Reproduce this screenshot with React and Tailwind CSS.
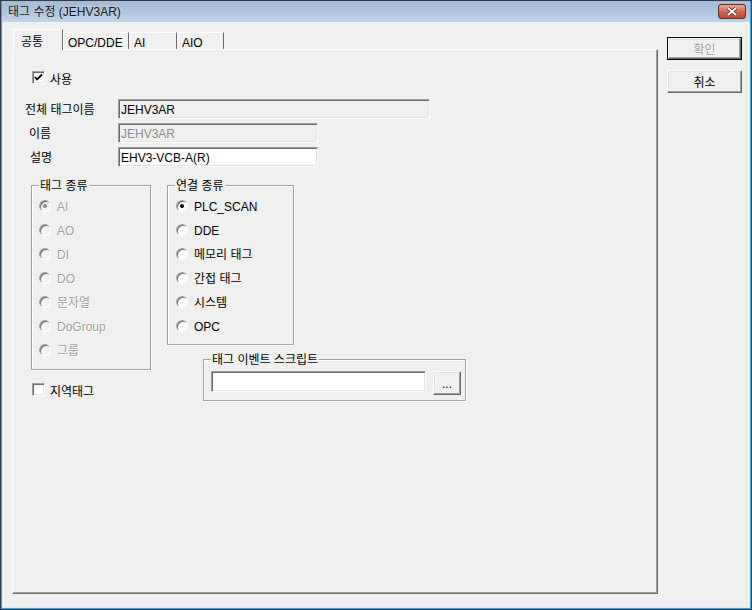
import React from 'react'

const sunken = "border border-t-[#a0a0a0] border-l-[#a0a0a0] border-b-white border-r-white shadow-[inset_1px_1px_0_#696969,inset_-1px_-1px_0_#e3e3e3]";
const raised = "border border-t-white border-l-white border-b-[#696969] border-r-[#696969] shadow-[inset_-1px_-1px_0_#a0a0a0,inset_1px_1px_0_#e3e3e3] bg-[#f0f0f0]";
const etched = "border border-[#a0a0a0] shadow-[inset_1px_1px_0_#fff,1px_1px_0_#fff]";

function Check({ checked }) {
  return (
    <div className={`w-[13px] h-[13px] bg-white flex items-center justify-center ${sunken}`}>
      {checked && (
        <svg width="9" height="9" viewBox="0 0 9 9">
          <path d="M1 4 L3 6.5 L8 1.5" stroke="#000" strokeWidth="1.8" fill="none" />
        </svg>
      )}
    </div>
  );
}

function Radio({ label, on, disabled }) {
  return (
    <div className="flex items-center h-[24px]">
      <div className={`w-[12px] h-[12px] rounded-full flex items-center justify-center border border-t-[#a0a0a0] border-l-[#a0a0a0] border-b-white border-r-white shadow-[inset_1px_1px_0_#696969] ${disabled ? 'bg-[#f0f0f0]' : 'bg-white'}`}>
        {on && <div className={`w-[4px] h-[4px] rounded-full ${disabled ? 'bg-[#8d8d8d]' : 'bg-black'}`} />}
      </div>
      <span className={`ml-[6px] pt-[2px] ${disabled ? 'text-[#a0a0a0] [text-shadow:1px_1px_0_#fff]' : 'text-black'}`}>{label}</span>
    </div>
  );
}

function Group({ title, className, children }) {
  return (
    <div className={`relative ${etched} ${className}`}>
      <span className="absolute left-[7px] top-[-8px] bg-[#f0f0f0] px-[1px] leading-[16px] text-black">{title}</span>
      {children}
    </div>
  );
}

export default function App() {
  const tabs = [
    { name: 'OPC/DDE', w: 'w-[66px]' },
    { name: 'AI', w: 'w-[48px]' },
    { name: 'AIO', w: 'w-[47px]' },
  ];

  return (
    <div className="w-[752px] h-[610px] bg-[#2f3d4f] p-[1px] font-['Liberation_Sans','Noto_Sans_CJK_KR',sans-serif] text-[12px] leading-[14px] overflow-hidden">
      <div className="w-full h-full bg-[#3aa6dc] pl-[1px] pr-[1px] pb-[1px] flex flex-col">
        <div className="h-[21px] flex items-center justify-between pl-[6px] pr-[4px] bg-gradient-to-b from-[#a5bad2] to-[#bfd4ea]">
          <span className="text-[#1b1b1b] pt-[1px]">태그 수정 (JEHV3AR)</span>
          <div className="w-[28px] h-[15px] rounded-[3px] border border-[#6e2a1f] bg-gradient-to-b from-[#e4a898] via-[#cf6b55] to-[#b84a35] flex items-center justify-center">
            <svg width="12" height="9" viewBox="0 0 12 9">
              <path d="M2 1 L10 8 M10 1 L2 8" stroke="#5a2218" strokeWidth="3.2" />
              <path d="M2 1 L10 8 M10 1 L2 8" stroke="#fff" strokeWidth="1.8" />
            </svg>
          </div>
        </div>
        <div className="flex-1 bg-[#dfe9f5] px-[1px] pb-[1px]">
          <div className="w-full h-full bg-[#f0f0f0] flex">
            {/* tab control */}
            <div className="ml-[9px] mt-[7px] w-[646px] flex flex-col">
              <div className="flex items-end h-[20px] pl-[1px]">
                <div className="w-[50px] bg-[#f0f0f0] border-t border-l border-t-white border-l-white border-r border-r-[#696969] pl-[7px] pt-[5px] relative z-10 mb-[-1px] h-[21px]">
                  공통
                </div>
                {tabs.map((t) => (
                  <div key={t.name} className={`${t.w} h-[17px] border-t border-l border-t-white border-l-white border-r border-r-[#696969] pl-[4px] pt-[3px] text-black`}>
                    {t.name}
                  </div>
                ))}
              </div>
              <div className="w-[646px] h-[545px] border border-t-white border-l-white border-b-[#696969] border-r-[#696969] shadow-[inset_-1px_-1px_0_#a0a0a0] flex flex-col">
                <div className="ml-[19px] mt-[21px] flex items-center h-[13px]">
                  <Check checked />
                  <span className="ml-[5px] pt-[4px]">사용</span>
                </div>
                <div className="mt-[15px] flex items-center h-[20px] pl-[12px]">
                  <span className="w-[93px] pt-[2px]">전체 태그이름</span>
                  <div className={`w-[312px] h-[20px] bg-[#f0f0f0] pl-[2px] pt-[1px] flex items-center ${sunken}`}>JEHV3AR</div>
                </div>
                <div className="mt-[4px] flex items-center h-[20px] pl-[16px]">
                  <span className="w-[89px] pt-[2px]">이름</span>
                  <div className={`w-[200px] h-[20px] bg-[#f0f0f0] pl-[2px] pt-[1px] flex items-center text-[#8d8d8d] ${sunken}`}>JEHV3AR</div>
                </div>
                <div className="mt-[4px] flex items-center h-[20px] pl-[17px]">
                  <span className="w-[88px] pt-[2px]">설명</span>
                  <div className={`w-[200px] h-[20px] bg-white pl-[2px] pt-[1px] flex items-center ${sunken}`}>EHV3-VCB-A(R)</div>
                </div>

                <div className="mt-[18px] ml-[18px] flex gap-[16px]">
                  <div className="flex flex-col">
                    <Group title="태그 종류" className="w-[120px] h-[185px] pt-[8px] pl-[7px]">
                      <Radio label="AI" on disabled />
                      <Radio label="AO" disabled />
                      <Radio label="DI" disabled />
                      <Radio label="DO" disabled />
                      <Radio label="문자열" disabled />
                      <Radio label="DoGroup" disabled />
                      <Radio label="그룹" disabled />
                    </Group>
                    <div className="mt-[13px] ml-[1px] flex items-center h-[13px]">
                      <Check />
                      <span className="ml-[5px] pt-[4px]">지역태그</span>
                    </div>
                  </div>
                  <div className="flex flex-col">
                    <Group title="연결 종류" className="w-[127px] h-[160px] pt-[8px] pl-[8px]">
                      <Radio label="PLC_SCAN" on />
                      <Radio label="DDE" />
                      <Radio label="메모리 태그" />
                      <Radio label="간접 태그" />
                      <Radio label="시스템" />
                      <Radio label="OPC" />
                    </Group>
                    <Group title="태그 이벤트 스크립트" className="ml-[36px] mt-[14px] w-[263px] h-[42px] pl-[7px] pt-[11px] flex items-start">
                      <div className={`w-[215px] h-[21px] bg-white ${sunken}`} />
                      <div className={`ml-[7px] w-[28px] h-[24px] flex items-center justify-center pt-[1px] ${raised}`}>...</div>
                    </Group>
                  </div>
                </div>
              </div>
            </div>

            {/* buttons */}
            <div className="ml-[9px] mt-[15px] flex flex-col gap-[10px]">
              <div className="w-[75px] h-[23px] border border-black">
                <div className={`w-full h-full flex items-center justify-center pt-[2px] text-[#a0a0a0] [text-shadow:1px_1px_0_#fff] ${raised}`}>확인</div>
              </div>
              <div className={`w-[75px] h-[23px] flex items-center justify-center pt-[2px] ${raised}`}>취소</div>
            </div>
          </div>
        </div>
      </div>
    </div>
  )
}
